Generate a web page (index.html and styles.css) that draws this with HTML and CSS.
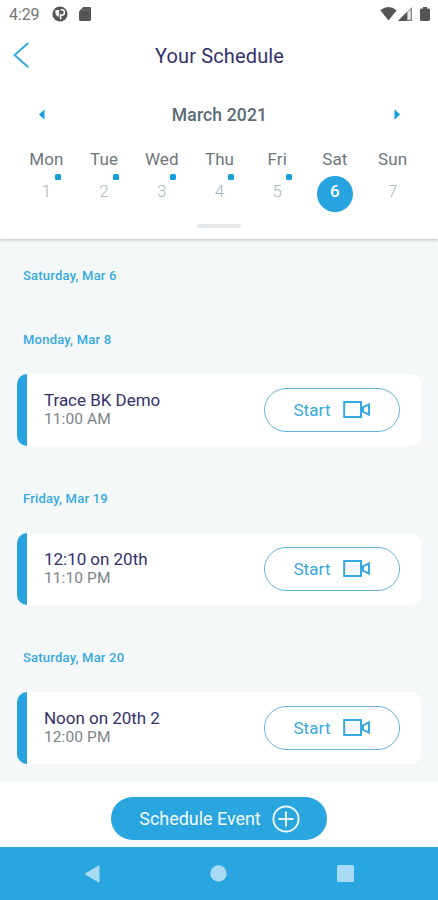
FILE: index.html
```html
<!DOCTYPE html>
<html lang="en">
<head>
<meta charset="utf-8">
<title>Your Schedule</title>
<link rel="stylesheet" href="styles.css">
</head>
<body>
<div class="app">
  <section class="top">
    <div class="status">
      <span class="clock">4:29</span>
      <svg class="st-app" width="16" height="16" viewBox="0 0 16 16"><circle cx="8" cy="8" r="7.6" fill="#555"/><path d="M8.6 3.8h1.2a2.6 2.6 0 0 1 0 5.2H8.6v4.2" fill="none" stroke="#fff" stroke-width="1.5"/><path d="M3.4 4h3.8v6.4H5.4A4 4 0 0 1 3.4 7z" fill="#eee"/></svg>
      <svg class="st-sd" width="12" height="14" viewBox="0 0 12 14"><path d="M4.2 0H10.6Q12 0 12 1.4V12.6Q12 14 10.6 14H1.4Q0 14 0 12.6V4.4Z" fill="#555"/><path d="M4.6 2v2M6.9 2v2M9.2 2v2" stroke="#777" stroke-width="1"/></svg>
      <span class="grow"></span>
      <svg width="17" height="14" viewBox="0 0 17 14"><path d="M0.3 3.2Q8.5-3 16.7 3.2L8.5 13.6Z" fill="#555"/></svg>
      <svg class="st-cell" width="14" height="14" viewBox="0 0 14 14"><path d="M14 0V14H0Z" fill="#8a8a8a"/><path d="M9 5V14H0Z" fill="#555"/><path d="M9.6 5.5 12.6 2.6V12.6H9.6Z" fill="#eee"/></svg>
      <svg class="st-bat" width="10" height="14" viewBox="0 0 10 14"><path d="M3 0h4v1.4h1.6Q10 1.4 10 2.8v9.8Q10 14 8.6 14H1.4Q0 14 0 12.6V2.8Q0 1.4 1.4 1.4H3Z" fill="#555"/></svg>
    </div>
    <header class="bar">
      <svg class="back" width="18" height="28" viewBox="0 0 18 28"><path d="M16.3 1 2.6 13 16.3 25.2" fill="none" stroke="#36a9e0" stroke-width="2"/></svg>
      <h1>Your Schedule</h1>
    </header>
    <div class="month">
      <svg width="6" height="12" viewBox="0 0 6 12"><path d="M5.5 .3V10.7L0 5.5Z" fill="#159fdc"/></svg>
      <h2>March 2021</h2>
      <svg width="6" height="12" viewBox="0 0 6 12"><path d="M.5 .3V10.7L6 5.5Z" fill="#159fdc"/></svg>
    </div>
    <div class="week">
      <div class="day"><span class="name">Mon</span><span class="num dot">1</span></div>
      <div class="day"><span class="name">Tue</span><span class="num dot">2</span></div>
      <div class="day"><span class="name">Wed</span><span class="num dot">3</span></div>
      <div class="day"><span class="name">Thu</span><span class="num dot">4</span></div>
      <div class="day"><span class="name">Fri</span><span class="num dot">5</span></div>
      <div class="day"><span class="name">Sat</span><span class="num today">6</span></div>
      <div class="day"><span class="name">Sun</span><span class="num">7</span></div>
    </div>
    <div class="handle"></div>
  </section>

  <main class="list">
    <h3 class="empty">Saturday, Mar 6</h3>
    <h3>Monday, Mar 8</h3>
    <article class="card">
      <div class="info"><div class="title">Trace BK Demo</div><div class="time">11:00 AM</div></div>
      <div class="start"><span>Start</span><svg width="28" height="18" viewBox="0 0 28 18"><path d="M1.2 1H18V16H1.2ZM20 6.4 26 3.4V13.6L20 10.6Z" fill="none" stroke="#36a9e0" stroke-width="2"/></svg></div>
    </article>
    <h3>Friday, Mar 19</h3>
    <article class="card">
      <div class="info"><div class="title">12:10 on 20th</div><div class="time">11:10 PM</div></div>
      <div class="start"><span>Start</span><svg width="28" height="18" viewBox="0 0 28 18"><path d="M1.2 1H18V16H1.2ZM20 6.4 26 3.4V13.6L20 10.6Z" fill="none" stroke="#36a9e0" stroke-width="2"/></svg></div>
    </article>
    <h3>Saturday, Mar 20</h3>
    <article class="card">
      <div class="info"><div class="title">Noon on 20th 2</div><div class="time">12:00 PM</div></div>
      <div class="start"><span>Start</span><svg width="28" height="18" viewBox="0 0 28 18"><path d="M1.2 1H18V16H1.2ZM20 6.4 26 3.4V13.6L20 10.6Z" fill="none" stroke="#36a9e0" stroke-width="2"/></svg></div>
    </article>
  </main>

  <footer class="foot">
    <div class="cta"><span>Schedule Event</span><svg width="28" height="28" viewBox="0 0 28 28"><circle cx="14" cy="14" r="12.6" fill="none" stroke="#e6f6fd" stroke-width="2"/><path d="M14 6.5v15M6.5 14h15" stroke="#e6f6fd" stroke-width="2"/></svg></div>
  </footer>
  <nav class="nav">
    <svg width="16" height="18" viewBox="0 0 16 18"><path d="M15 .8V17.2L1 9Z" fill="#a9daf3" stroke="#a9daf3" stroke-linejoin="round"/></svg>
    <svg width="17" height="17" viewBox="0 0 17 17"><circle cx="8.5" cy="8.5" r="8.2" fill="#a9daf3"/></svg>
    <svg width="17" height="17" viewBox="0 0 17 17"><rect width="17" height="17" rx="1.5" fill="#a9daf3"/></svg>
  </nav>
</div>
</body>
</html>
```
FILE: styles.css
```css
* { box-sizing: border-box; }
body { margin: 0; font-family: Roboto, sans-serif; background: #fff; }
h1, h2, h3 { margin: 0; }
svg { display: block; flex: none; }
.app { width: 438px; height: 900px; display: flex; flex-direction: column; overflow: hidden; background: #f4f8f9; }
.top { position: relative; z-index: 1; height: 239px; flex: none; background: #fff; box-shadow: 0 1px 3px rgba(0, 0, 0, .25); }
.status { height: 28px; display: flex; align-items: center; padding: 0 8px 0 9px; }
.clock { font-size: 16px; line-height: 29px; color: #757575; width: 43px; letter-spacing: -.1px; }
.st-sd { margin-left: 11px; }
.st-cell { margin-left: 1px; }
.st-bat { margin-left: 8px; }
.grow { flex: 1; }
.bar { height: 56px; display: grid; grid-template-columns: 60px 1fr 60px; align-items: center; }
.back { margin-left: 12px; }
h1 { text-align: center; font-size: 20px; font-weight: 400; color: #34316c; letter-spacing: .15px; padding-left: 1px; }
.month { height: 61px; display: flex; justify-content: space-between; align-items: center; padding: 0 38px 0 39px; }
h2 { font-size: 17.5px; font-weight: 500; color: #5a6b73; letter-spacing: .15px; }
.week { display: grid; grid-template-columns: repeat(7, 1fr); padding: 0 16.5px 0 17.5px; height: 80px; margin-top: 4px; }
.day { display: flex; flex-direction: column; align-items: center; }
.name { font-size: 17px; line-height: 20px; color: #6d777b; letter-spacing: .1px; }
.num { position: relative; width: 36px; height: 36px; margin-top: 7px; line-height: 31px; font-size: 17px; text-align: center; color: #a8b8bf; font-weight: 300; }
.dot::after { content: ""; position: absolute; left: 26.5px; top: -2px; width: 6px; height: 6px; border-radius: 1.5px; background: #159fdc; }
.today { border-radius: 50%; background: #27a3df; color: #fff; font-weight: 500; }
.handle { width: 44px; height: 4px; border-radius: 2px; background: #e6e9ec; margin: -5px auto 0; }
.list { flex: 1; min-height: 0; overflow: hidden; padding: 27px 17px 0; }
h3 { font-size: 13px; line-height: 20px; font-weight: 500; color: #36a9e0; padding-left: 6px; letter-spacing: .22px; }
.empty { margin-bottom: 44px; }
.card { height: 72px; margin: 24px 0 43px; border-left: 10px solid #27a3df; border-radius: 10px; background: #fff; display: flex; align-items: center; justify-content: space-between; padding: 0 21px 0 17px; }
.title { font-size: 17px; line-height: 19px; color: #34316c; letter-spacing: -.03px; }
.time { font-size: 15.5px; line-height: 19px; color: #7b8589; letter-spacing: .1px; }
.start { width: 136px; height: 44px; border: 1px solid #62b5e2; border-radius: 22px; display: flex; align-items: center; justify-content: center; gap: 12px; color: #36a9e0; font-size: 17px; letter-spacing: .1px; }
.foot { height: 66px; flex: none; background: #fff; padding-top: 16px; display: flex; justify-content: center; align-items: flex-start; }
.cta { width: 216px; height: 43px; border-radius: 22px; background: #29a5df; color: #f1faff; font-size: 18px; letter-spacing: -.05px; display: flex; align-items: center; justify-content: center; gap: 11px; padding-left: 1px; }
.nav { height: 53px; flex: none; background: #29a5df; display: flex; justify-content: space-between; align-items: center; padding: 0 84px; }
```
